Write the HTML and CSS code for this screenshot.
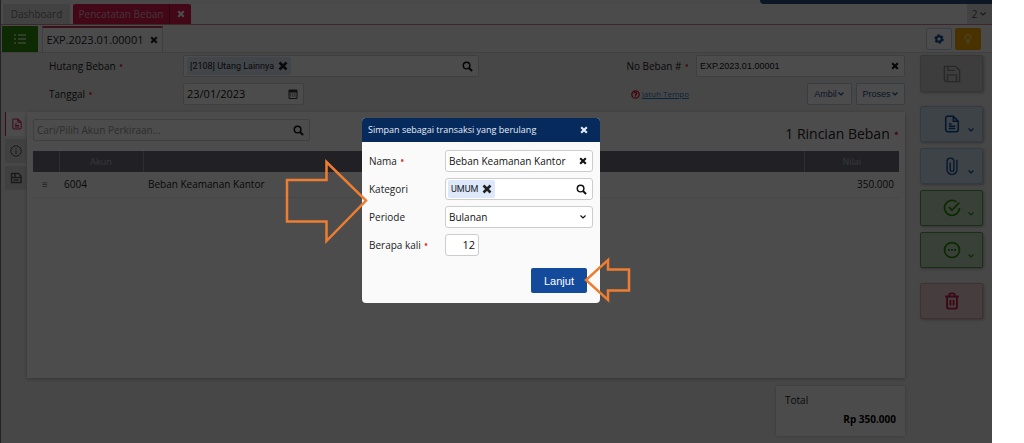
FILE: index.html
```html
<!DOCTYPE html>
<html lang="id">
<head>
<meta charset="utf-8">
<title>Pencatatan Beban</title>
<link rel="stylesheet" href="styles.css">
</head>
<body>
<svg class="defs" aria-hidden="true">
  <symbol id="x" viewBox="0 0 10 10"><path d="M1.500 1.500l7 7M8.500 1.500l-7 7" fill="none" stroke="currentColor" stroke-width="2.600"/></symbol>
  <symbol id="search" viewBox="0 0 12 12"><circle cx="5" cy="5" r="3.600" fill="none" stroke="currentColor" stroke-width="1.600"/><path d="M7.500 7.500l3.500 3.500" stroke="currentColor" stroke-width="2.200"/></symbol>
  <symbol id="down" viewBox="0 0 8 8"><path d="M1.500 2.500L4 5l2.500-2.500" fill="none" stroke="currentColor" stroke-width="1.200"/></symbol>
  <symbol id="doc" viewBox="0 0 20 20"><path d="M4.500 1.500h7l5.500 5.500v9a2.500 2.500 0 0 1-2.500 2.500h-9a2.500 2.500 0 0 1-2.500-2.500v-13a1.500 1.500 0 0 1 1.500-1.500zM11.500 1.500V7H17M6.500 10h3M6.500 12.500h7M6.500 15h7" fill="none" stroke="currentColor" stroke-width="1.700"/></symbol>
</svg>
<div class="app">
  <div class="brand"><div class="brand-bar"></div></div>
  <nav class="tabs">
    <button class="tab">Dashboard</button>
    <div class="tab-active"><button class="tab-name">Pencatatan Beban</button><button class="tab-close" aria-label="Tutup"><svg class="i8"><use href="#x"/></svg></button></div>
    <button class="tab-count">2 <svg class="i8"><use href="#down"/></svg></button>
  </nav>
  <div class="subbar">
    <button class="list-btn" aria-label="Daftar"><svg width="14" height="14" viewBox="0 0 14 14" fill="none" stroke="currentColor" stroke-width="1.500"><path d="M5 3h8M5 7h8M5 11h8M1 3h2M1 7h2M1 11h2"/></svg></button>
    <button class="record-tab">EXP.2023.01.00001 <svg class="i8"><use href="#x"/></svg></button>
    <div class="subbar-tools">
      <button class="tool" aria-label="Pengaturan"><svg width="10" height="10" viewBox="0 0 10 10"><circle cx="5" cy="5" r="2.700" fill="none" stroke="currentColor" stroke-width="2"/><circle cx="5" cy="5" r="4" fill="none" stroke="currentColor" stroke-width="1.500" stroke-dasharray="2.100 2.100"/></svg></button>
      <button class="tool tool-tip" aria-label="Tips"><svg width="10" height="12" viewBox="0 0 10 12" fill="none" stroke="currentColor"><path d="M3.500 8c0-1-1.500-1.800-1.500-3.500a3 3 0 0 1 6 0C8 6.200 6.500 7 6.500 8zM3.500 10h3M5 5v3"/></svg></button>
    </div>
  </div>
  <div class="body">
    <main class="main">
      <form class="form">
        <label class="lbl" for="hutang">Hutang Beban <b class="req">•</b></label>
        <div class="field field-wide"><span class="chip">[2108] Utang Lainnya <svg class="i10"><use href="#x"/></svg></span><input id="hutang" class="bare"><svg class="i11"><use href="#search"/></svg></div>
        <label class="lbl lbl-right" for="nomor">No Beban # <b class="req">•</b></label>
        <div class="field"><input id="nomor" class="bare arial" value="EXP.2023.01.00001"><svg class="i8"><use href="#x"/></svg></div>
        <label class="lbl" for="tanggal">Tanggal <b class="req">•</b></label>
        <div class="field field-date"><input id="tanggal" class="bare" value="23/01/2023"><svg width="10" height="10" viewBox="0 0 10 10"><path d="M1 1h8v8.500H1z" fill="none" stroke="#333"/><path d="M1 1h8v2.500H1z" fill="#333"/><path d="M2 5h6M2 7h6" stroke="#333" stroke-dasharray="1.200 1"/></svg></div>
        <a class="due" href="#"><svg width="9" height="9" viewBox="0 0 9 9" fill="none" stroke="#d80f2d" stroke-width="1.300"><circle cx="4.500" cy="4.500" r="3.700"/><path d="M3.300 3.500c0-1.600 2.400-1.500 2.400 0 0 .8-1.200.8-1.200 2v1"/></svg><span>Jatuh Tempo</span></a>
        <div class="actions"><button type="button" class="action">Ambil<svg class="i8"><use href="#down"/></svg></button><button type="button" class="action">Proses<svg class="i8"><use href="#down"/></svg></button></div>
      </form>
      <div class="detail">
        <div class="side">
          <button class="side-tab side-on" aria-label="Rincian"><svg class="i12"><use href="#doc"/></svg></button>
          <button class="side-tab" aria-label="Info"><svg class="i12" viewBox="0 0 12 12" fill="none" stroke="currentColor"><circle cx="6" cy="6" r="5.200"/><path d="M6 5v4M6 3v1"/></svg></button>
          <button class="side-tab" aria-label="Simpan"><svg class="i12" viewBox="0 0 12 12" fill="none" stroke="currentColor" stroke-width="1.400"><path d="M1.500 1.500h7l2.500 2.500v6.500H1.500zM1 5.500h10M3.500 8h5M5 1.500V5"/></svg></button>
        </div>
        <section class="panel">
          <div class="panel-head">
            <div class="field field-find"><input class="bare" aria-label="Cari akun" placeholder="Cari/Pilih Akun Perkiraan..."><svg class="i11"><use href="#search"/></svg></div>
            <h2 class="title">1 Rincian Beban <b class="req">•</b></h2>
          </div>
          <table class="grid">
            <colgroup><col class="c1"><col class="c2"><col><col class="c4"></colgroup>
            <thead><tr><th></th><th>Akun</th><th></th><th>Nilai</th></tr></thead>
            <tbody><tr><td class="grip">≡</td><td>6004</td><td>Beban Keamanan Kantor</td><td class="num">350.000</td></tr></tbody>
          </table>
        </section>
      </div>
      <div class="total"><span>Total</span><strong>Rp 350.000</strong></div>
    </main>
    <aside class="rail">
      <button class="big save" aria-label="Simpan"><svg class="i20 thin" viewBox="0 0 20 20"><path d="M2 1.500h12l4.500 4.500v12.500h-15a2 2 0 0 1-2-2V2zM5.500 1.500V6H13M5 18.500V11h10v7.500"/></svg></button>
      <button class="big blue" aria-label="Dokumen"><svg class="i20"><use href="#doc"/></svg><svg class="i8 more"><use href="#down"/></svg></button>
      <button class="big blue" aria-label="Lampiran"><svg class="i20 thin" viewBox="0 0 20 20"><path d="M15.500 3v11a5.500 5.500 0 0 1-11 0V5a3.800 3.800 0 0 1 7.600 0v9a2 2 0 0 1-4.100 0V6"/></svg><svg class="i8 more"><use href="#down"/></svg></button>
      <button class="big green" aria-label="Setujui"><svg class="i20" viewBox="0 0 20 20"><path d="M15 3.200A8.300 8.300 0 1 0 18.300 10M6.500 9l3.500 3.500L18 4"/></svg><svg class="i8 more"><use href="#down"/></svg></button>
      <button class="big green" aria-label="Lainnya"><svg class="i20" viewBox="0 0 20 20"><circle cx="10" cy="10" r="8.300"/><path d="M5.500 10h2M9 10h2M12.500 10h2"/></svg><svg class="i8 more"><use href="#down"/></svg></button>
      <button class="big red" aria-label="Hapus"><svg class="i20" viewBox="0 0 20 20"><path d="M2.500 5h15M4.500 5v11.500a2 2 0 0 0 2 2h7a2 2 0 0 0 2-2V5M7 5V3.500a2 2 0 0 1 2-2h2a2 2 0 0 1 2 2V5M8.300 9v6M11.700 9v6"/></svg></button>
    </aside>
  </div>
  <div class="shade"></div>
  <div class="dialog" role="dialog" aria-labelledby="dlg">
    <header class="dialog-head"><span id="dlg">Simpan sebagai transaksi yang berulang</span><button class="dialog-x" aria-label="Tutup"><svg class="i8"><use href="#x"/></svg></button></header>
    <form class="dialog-form">
      <label for="nama">Nama <b class="req">•</b></label>
      <div class="field"><input id="nama" class="bare" value="Beban Keamanan Kantor"><svg class="i8"><use href="#x"/></svg></div>
      <label for="kategori">Kategori</label>
      <div class="field field-chip"><span class="chip">UMUM <svg class="i10"><use href="#x"/></svg></span><input id="kategori" class="bare"><svg class="i11"><use href="#search"/></svg></div>
      <label for="periode">Periode</label>
      <div class="field"><select id="periode" class="bare"><option>Bulanan</option></select><svg class="i8"><use href="#down"/></svg></div>
      <label for="kali">Berapa kali <b class="req">•</b></label>
      <div class="field field-num"><input id="kali" class="bare num" value="12"></div>
      <button type="button" class="next">Lanjut</button>
    </form>
  </div>
  <svg class="arrow arrow-right" viewBox="0 0 84 88"><path d="M3 23h39.500V5L82 43.500 42.500 84V64.500H3z"/></svg>
  <svg class="arrow arrow-left" viewBox="0 0 50 48"><path d="M46 13.500H25V4L3 24l22 20V34.500h21z"/></svg>
</div>
</body>
</html>
```

FILE: styles.css
```css
* { box-sizing: border-box; }
body { margin: 0; background: #fff; font: 10px/16px "Open Sans", "Noto Sans", sans-serif; color: #222; }
button, input, select { font: inherit; color: inherit; margin: 0; padding: 0; }
button { border: 0; background: none; display: flex; align-items: center; justify-content: center; white-space: nowrap; }
.defs { position: absolute; width: 0; height: 0; }
svg { flex: none; display: block; }
.i8 { width: 8px; height: 8px; }
.i10 { width: 10px; height: 10px; }
.i11 { width: 11px; height: 11px; }
.i12 { width: 12px; height: 12px; }
.i20 { width: 18px; height: 18px; fill: none; stroke: currentColor; stroke-width: 2; }
.thin { stroke-width: 1.5; }

.app { position: relative; display: flex; flex-direction: column; min-height: 100vh; margin-right: 32px; border-left: 1px solid #777; background: #efefef; }
.brand { height: 4px; background: #f4f4f4; }
.brand-bar { width: 232px; height: 4px; margin-left: auto; border-bottom-left-radius: 8px; background: #2a4a78; }
.tabs { display: flex; gap: 3px; height: 21px; padding-left: 2px; border-bottom: 1px solid #c98590; background: #fafafa; }
.tab { width: 67px; background: #dedede; color: #777; }
.tab-active { display: flex; border-radius: 2px 2px 0 0; background: #dc1c52; color: #fff; }
.tab-name { width: 97px; border-right: 1px solid #8f1238; color: #eba9bc; }
.tab-close { width: 21px; }
.tab-count { width: 25px; margin-left: auto; gap: 2px; background: #ddd; color: #555; }

.subbar { display: flex; gap: 4px; height: 28px; padding: 1px 11px 0 1px; border-bottom: 1px solid #d5d5d5; background: #f9f9f9; }
.list-btn { width: 36px; background: #2c8c08; color: #c6e8b8; }
.record-tab { width: 121px; gap: 7px; border: 1px solid #d0d0d0; border-top: 2px solid #c43a60; border-bottom: 0; background: #fbfbfb; font-size: 11px; }
.subbar-tools { display: flex; align-items: center; gap: 3px; margin-left: auto; }
.tool { width: 26px; height: 22px; border: 1px solid #bcd0e4; border-radius: 2px; background: #fff; color: #0c4f94; }
.tool-tip { border-color: #e9a400; background: #f4a800; color: #ffe4a0; }

.body { flex: 1; display: flex; gap: 15px; padding: 2px 9px 7px 4px; }
.main { flex: 1; display: flex; flex-direction: column; min-width: 0; }
.form { display: grid; grid-template-columns: 134px 296px 1fr 209px; grid-template-rows: 22px 22px; row-gap: 6px; align-items: center; padding-left: 44px; }
.lbl, .dialog label { display: flex; align-items: center; gap: 3px; }
.lbl-right { justify-self: end; padding-right: 7px; }
.req { color: #e0433c; font-weight: 400; font-size: 12px; }
.field { display: flex; align-items: center; gap: 4px; height: 22px; padding: 0 5px 0 3px; border: 1px solid #d2d2d2; border-radius: 2px; background: #fff; color: #111; }
.field-date { width: 121px; font-size: 11px; }
.bare { flex: 1; min-width: 0; width: 100%; border: 0; outline: 0; background: transparent; }
.arial { font-family: "Liberation Sans", Arial, sans-serif; font-size: 9px; }
.chip { display: flex; align-items: center; gap: 4px; height: 18px; padding: 0 3px; border-radius: 2px; background: #dde9fa; font-family: Roboto, sans-serif; font-size: 9px; color: #222; white-space: nowrap; }
.due { display: flex; align-items: center; justify-self: end; gap: 2px; padding-right: 7px; font-size: 8px; color: #2b7cc4; }
.actions { display: flex; justify-content: end; gap: 4px; }
.action { width: 45px; height: 22px; border: 1px solid #b9cce0; border-radius: 2px; background: #fff; font: 9px "Liberation Sans", Arial, sans-serif; color: #1c4a86; }
.action:last-child { width: 49px; }

.detail { flex: 1; display: flex; padding-top: 7px; }
.side { display: flex; flex-direction: column; gap: 3px; width: 22px; }
.side-tab { height: 24px; background: #d8d8d8; color: #555; }
.side-on { border-left: 1px solid #dc1c52; background: #fff; color: #dc1c52; }
.panel { flex: 1; padding: 7px 6px; background: #fff; box-shadow: 0 1px 4px #aaa; }
.panel-head { display: flex; align-items: center; justify-content: space-between; height: 32px; padding-bottom: 10px; }
.field-find { width: 277px; }
.field-find .bare::placeholder { color: #999; opacity: 1; }
.title { display: flex; gap: 4px; margin: 8px 0 0; font-size: 14px; line-height: 20px; font-weight: 400; }
.title .req { font-size: 14px; }
.grid { width: 100%; table-layout: fixed; border-collapse: collapse; }
.c1 { width: 26px; }
.c2 { width: 84px; }
.c4 { width: 95px; }
.grid th { height: 21px; padding: 0; border-left: 1px solid #999; background: #6f6f7e; color: #b8b8c0; font-size: 9px; font-weight: 400; }
.grid th:first-child { border-left: 0; }
.grid td { height: 25px; padding: 0 5px; border-bottom: 1px solid #eee; }
.grid .grip { padding: 0 0 0 9px; color: #777; }
.num { text-align: right; }
.total { display: flex; flex-direction: column; align-self: flex-end; gap: 3px; width: 129px; height: 50px; margin-top: 8px; padding: 6px 9px; background: #fafafa; box-shadow: 0 0 3px #bbb; }
.total strong { align-self: flex-end; color: #000; }

.rail { display: flex; flex-direction: column; gap: 6px; width: 63px; }
.big { position: relative; height: 36px; border: 1px solid; border-radius: 2px; box-shadow: 1px 1px 3px #aaa; }
.more { position: absolute; right: 7px; bottom: 7px; }
.save { height: 37px; margin-bottom: 8px; border-color: #b8b8b8; background: #ccc; color: #858585; }
.blue { border-color: #a8c4e0; background: #cfdfee; color: #0e4b94; }
.green { border-color: #55a04a; background: #c0d8bc; color: #2c8c08; }
.red { margin-top: 9px; border-color: #d5a0ac; background: #e9ccd2; color: #c41846; }

.shade { position: absolute; inset: 0 0 0 -1px; background: rgba(0, 0, 0, 0.7); }
.dialog { position: absolute; left: 361px; top: 118px; width: 238px; overflow: hidden; border-radius: 4px; background: #fafafa; }
.dialog-head { display: flex; align-items: center; justify-content: space-between; height: 24px; padding: 0 12px 0 6px; background: #062a5c; color: #e6edf7; font-size: 9px; }
.dialog-form { display: grid; grid-template-columns: 76px 1fr; row-gap: 6px; align-items: center; padding: 8px 7px 10px; }
.dialog .field { border-color: #ccc; border-radius: 3px; }
.dialog .field-chip { padding-left: 2px; }
select.bare { appearance: none; }
.dialog .field-num { width: 34px; padding: 0 3px; font-size: 11px; }
.next { grid-column: 2; justify-self: end; width: 56px; height: 25px; margin: 6px 6px 0 0; border-radius: 2px; background: #144a9c; color: #fff; font-family: "Liberation Sans", Arial, sans-serif; font-size: 11px; }
.arrow { position: absolute; fill: none; stroke: #ed7d31; stroke-width: 2.5; }
.arrow-right { left: 283px; top: 157px; width: 84px; height: 88px; }
.arrow-left { left: 582px; top: 256px; width: 50px; height: 48px; }
```
